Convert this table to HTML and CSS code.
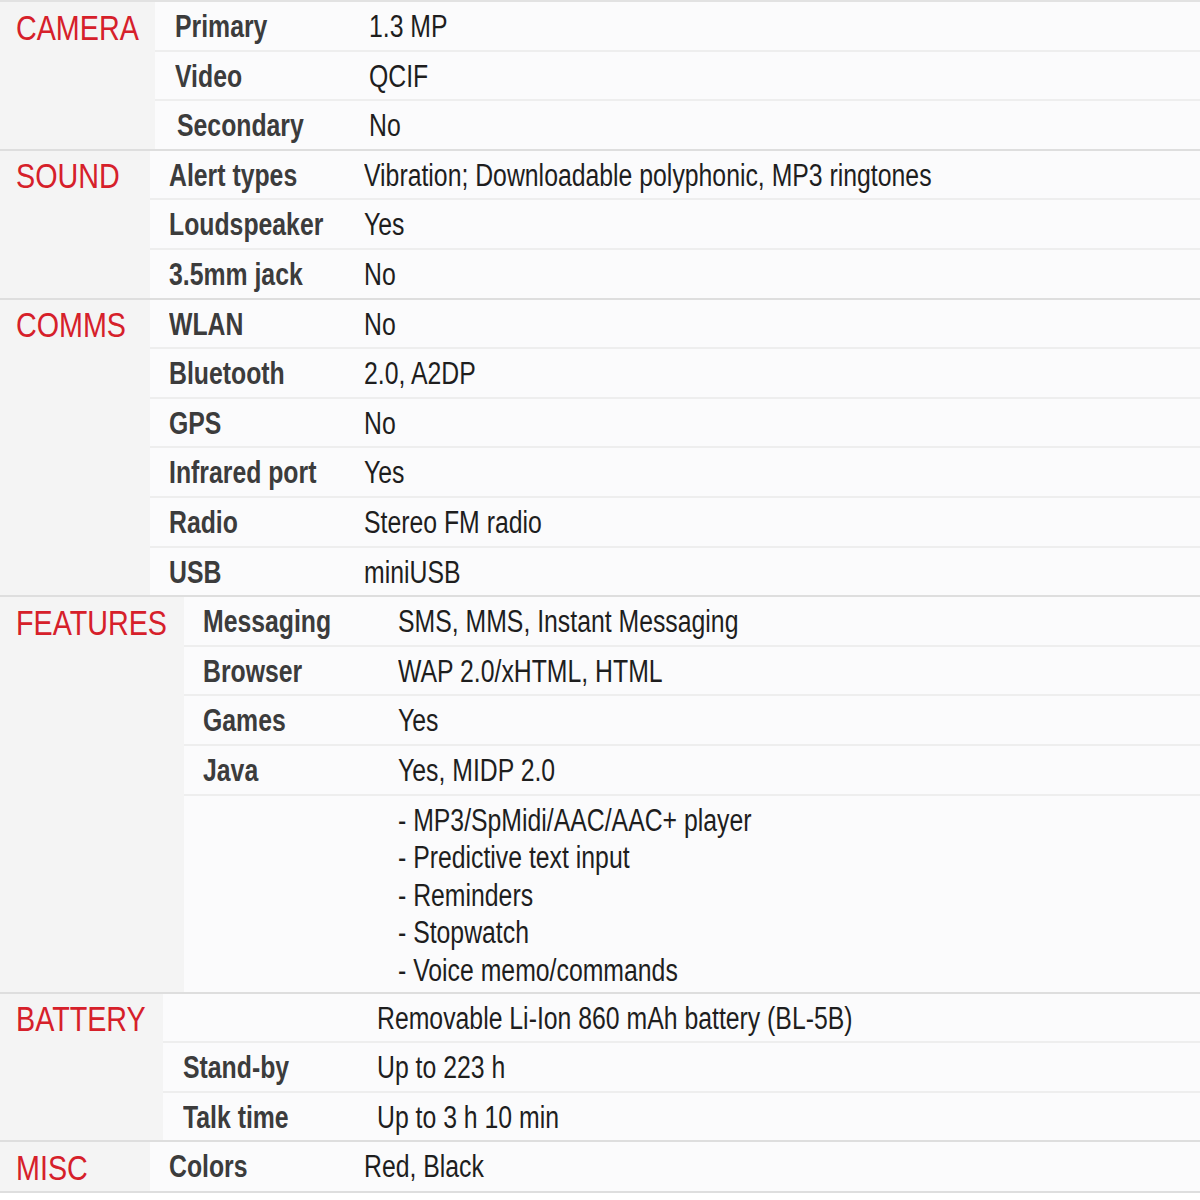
FILE: index.html
```html
<!DOCTYPE html>
<html lang="en">
<head>
<meta charset="utf-8">
<title>Specs</title>
<link rel="stylesheet" href="styles.css">
</head>
<body>
<div class="specs">
  <section class="sec sec-first">
    <div class="cat w155"><span class="t">CAMERA</span></div>
    <div class="rows">
      <div class="row"><div class="ttl pl20"><span class="t">Primary</span></div><div class="nfo"><span class="t">1.3 MP</span></div></div>
      <div class="row"><div class="ttl pl20"><span class="t">Video</span></div><div class="nfo"><span class="t">QCIF</span></div></div>
      <div class="row"><div class="ttl pl22"><span class="t">Secondary</span></div><div class="nfo"><span class="t">No</span></div></div>
    </div>
  </section>
  <section class="sec">
    <div class="cat w150"><span class="t">SOUND</span></div>
    <div class="rows">
      <div class="row"><div class="ttl"><span class="t">Alert types</span></div><div class="nfo"><span class="t">Vibration; Downloadable polyphonic, MP3 ringtones</span></div></div>
      <div class="row"><div class="ttl"><span class="t">Loudspeaker</span></div><div class="nfo"><span class="t">Yes</span></div></div>
      <div class="row"><div class="ttl"><span class="t">3.5mm jack</span></div><div class="nfo"><span class="t">No</span></div></div>
    </div>
  </section>
  <section class="sec">
    <div class="cat w150"><span class="t">COMMS</span></div>
    <div class="rows">
      <div class="row"><div class="ttl"><span class="t">WLAN</span></div><div class="nfo"><span class="t">No</span></div></div>
      <div class="row"><div class="ttl"><span class="t">Bluetooth</span></div><div class="nfo"><span class="t">2.0, A2DP</span></div></div>
      <div class="row"><div class="ttl"><span class="t">GPS</span></div><div class="nfo"><span class="t">No</span></div></div>
      <div class="row"><div class="ttl"><span class="t">Infrared port</span></div><div class="nfo"><span class="t">Yes</span></div></div>
      <div class="row"><div class="ttl"><span class="t">Radio</span></div><div class="nfo"><span class="t">Stereo FM radio</span></div></div>
      <div class="row"><div class="ttl"><span class="t">USB</span></div><div class="nfo"><span class="t">miniUSB</span></div></div>
    </div>
  </section>
  <section class="sec">
    <div class="cat w184"><span class="t">FEATURES</span></div>
    <div class="rows">
      <div class="row"><div class="ttl"><span class="t">Messaging</span></div><div class="nfo"><span class="t">SMS, MMS, Instant Messaging</span></div></div>
      <div class="row"><div class="ttl"><span class="t">Browser</span></div><div class="nfo"><span class="t">WAP 2.0/xHTML, HTML</span></div></div>
      <div class="row"><div class="ttl"><span class="t">Games</span></div><div class="nfo"><span class="t">Yes</span></div></div>
      <div class="row"><div class="ttl"><span class="t">Java</span></div><div class="nfo"><span class="t">Yes, MIDP 2.0</span></div></div>
      <div class="row row-multi"><div class="ttl"></div><div class="nfo multi"><span class="t">- MP3/SpMidi/AAC/AAC+ player<br>- Predictive text input<br>- Reminders<br>- Stopwatch<br>- Voice memo/commands</span></div></div>
    </div>
  </section>
  <section class="sec">
    <div class="cat w163"><span class="t">BATTERY</span></div>
    <div class="rows">
      <div class="row"><div class="ttl"></div><div class="nfo"><span class="t">Removable Li-Ion 860 mAh battery (BL-5B)</span></div></div>
      <div class="row"><div class="ttl pl20"><span class="t">Stand-by</span></div><div class="nfo"><span class="t">Up to 223 h</span></div></div>
      <div class="row"><div class="ttl pl20"><span class="t">Talk time</span></div><div class="nfo"><span class="t">Up to 3 h 10 min</span></div></div>
    </div>
  </section>
  <section class="sec">
    <div class="cat w150"><span class="t">MISC</span></div>
    <div class="rows">
      <div class="row row-misc"><div class="ttl"><span class="t">Colors</span></div><div class="nfo"><span class="t">Red, Black</span></div></div>
    </div>
  </section>
</div>
</body>
</html>
```
FILE: styles.css
```css
html, body {
  margin: 0;
  padding: 0;
  background: #ffffff;
}

.specs {
  width: 1200px;
  font-family: "Liberation Sans", Arial, sans-serif;
}

.sec {
  display: flex;
  border-bottom: 2px solid #dedede;
}

.sec-first {
  border-top: 2px solid #e2e2e2;
}

.cat {
  flex: none;
  box-sizing: border-box;
  background: #f4f4f4;
  color: #d6202a;
  font-size: 35px;
  line-height: 44px;
  padding: 3.5px 0 0 16px;
  white-space: nowrap;
}

.cat .t {
  display: inline-block;
  transform: scaleX(0.82);
  transform-origin: left center;
}

.w150 { width: 150px; }
.w155 { width: 155px; }
.w163 { width: 163px; }
.w184 { width: 184px; }

.rows {
  flex: 1;
  display: flex;
  flex-direction: column;
  background: #fbfbfc;
}

.row {
  display: flex;
  box-sizing: border-box;
  height: 49.6px;
  padding-top: 3px;
  border-bottom: 2px solid #eeeeee;
  font-size: 31px;
  line-height: 44px;
  white-space: nowrap;
}

.row:last-child {
  height: 47.6px;
  border-bottom: 0;
}

.row.row-multi {
  height: 196px;
  padding-top: 6px;
}

.row.row-misc {
  height: 48.5px;
}

.ttl {
  flex: none;
  box-sizing: border-box;
  width: 214px;
  padding-left: 19px;
  font-weight: bold;
  color: #3c3c3c;
}

.pl20 { padding-left: 20px; }
.pl22 { padding-left: 22px; }

.nfo {
  flex: 1;
  color: #1e1e1e;
}

.t {
  display: inline-block;
  transform: scaleX(0.80);
  transform-origin: left center;
}

.multi {
  line-height: 37.5px;
}
```
